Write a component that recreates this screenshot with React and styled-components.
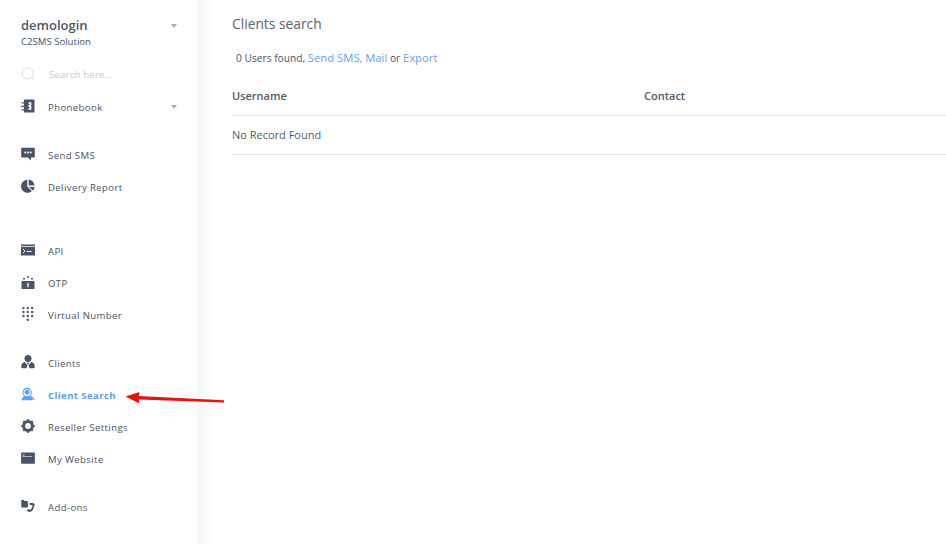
import React from 'react';
import styled, { createGlobalStyle } from 'styled-components';

const Global = createGlobalStyle`
  html, body { margin: 0; padding: 0; height: 100%; background: #fff; overflow: hidden; }
  body { font-family: "Open Sans", "Liberation Sans", sans-serif; }
`;

const Page = styled.div`
  position: relative;
  display: flex;
  width: 946px;
  height: 544px;
  overflow: hidden;
`;

const Sidebar = styled.aside`
  flex: 0 0 197px;
  box-sizing: border-box;
  height: 544px;
  padding-top: 15px;
  background: #fff;
  color: #4a5468;
`;

// soft shade right of the sidebar
const Shade = styled.div`
  flex: 0 0 21px;
  height: 544px;
  background: linear-gradient(to right, #f6f6f6, #fdfdfd 70%, #fff);
`;

const Account = styled.div`
  display: flex;
  justify-content: space-between;
  padding: 0 20px 0 21px;
`;

const AccountName = styled.div`
  font-size: 13px;
  line-height: 20px;
  font-weight: 600;
  color: #4f586b;
`;

const AccountSub = styled.div`
  font-size: 9.6px;
  line-height: 14px;
  color: #4a5468;
`;

const Caret = styled.span`
  width: 0;
  height: 0;
  margin-top: ${p => p.$top || 0}px;
  border-left: 3px solid transparent;
  border-right: 3px solid transparent;
  border-top: 4px solid #a9aeb8;
`;

const Search = styled.div`
  display: flex;
  align-items: center;
  height: 32px;
  margin: 9px 0 1px;
  padding-left: 21px;
  font-size: 9.6px;
  letter-spacing: 0.2px;
  color: #c6cad2;
`;

const SearchText = styled.span`
  margin-left: 14px;
`;

const Nav = styled.nav`
  display: flex;
  flex-direction: column;
`;

const Group = styled.div`
  display: flex;
  flex-direction: column;
  margin-top: ${p => p.$gap || 0}px;
`;

const Item = styled.a`
  display: flex;
  align-items: center;
  height: 32px;
  padding: 0 20px 0 21px;
  font-size: 9.6px;
  letter-spacing: 0.38px;
  font-weight: ${p => (p.$active ? 700 : 400)};
  color: ${p => (p.$active ? '#5b9dfa' : '#4a5468')};
`;

const IconBox = styled.span`
  display: flex;
  flex: 0 0 14px;
  width: 14px;
  height: 14px;
  margin-right: 13px;
  margin-top: -2px;
`;

const Label = styled.span`
  flex: 1;
`;

const Main = styled.main`
  flex: 1;
  padding: 15px 0 0 14px;
  min-width: 0;
`;

const Title = styled.h1`
  margin: 0;
  font-size: 13.8px;
  line-height: 17px;
  font-weight: 400;
  color: #5b6472;
`;

const Summary = styled.p`
  margin: 17px 0 0 4px;
  font-size: 10.2px;
  line-height: 17px;
  color: #4f5661;
`;

const Link = styled.a`
  font-size: 11.3px;
  color: #6b9ff0;
`;

const Table = styled.div`
  margin-top: 10px;
`;

const Row = styled.div`
  display: grid;
  grid-template-columns: 412px 1fr;
  align-items: center;
  box-sizing: content-box;
  height: 36px;
  padding-bottom: 2px;
  border-bottom: 1px solid #e4e5e7;
  font-size: 11px;
  font-weight: ${p => (p.$head ? 600 : 400)};
  color: #555b66;
`;

const Arrow = styled.svg`
  position: absolute;
  left: 124px;
  top: 390px;
`;

const stroke = { fill: 'none', stroke: 'currentColor' };

const icons = {
  phonebook: (
    <svg width="14" height="14" viewBox="0 0 14 14" fill="currentColor">
      <path d="M3 .6h9.500a1 1 0 0 1 1 1v10.800a1 1 0 0 1-1 1H3v-2H.6v-1.200H3V8H0V6.800h3V4.500H.6V3.300H3z" />
      <path fill="#fff" d="M7.500 3.300h2.800v7.400H7.500V9.200h1V8h-1V6h1V4.800h-1z" />
    </svg>
  ),
  sms: (
    <svg width="14" height="14" viewBox="0 0 14 14" fill="currentColor">
      <path d="M1 .8h12a.8.8 0 0 1 .8.8v8.200a.8.8 0 0 1-.8.8H10l-.3 2.900L7 10.600H1a.8.8 0 0 1-.8-.8V1.600A.8.8 0 0 1 1 .8z" />
      <circle cx="4.300" cy="5.600" r="1" fill="#fff" />
      <circle cx="7" cy="5.600" r="1" fill="#fff" />
      <circle cx="9.700" cy="5.600" r="1" fill="#fff" />
    </svg>
  ),
  report: (
    <svg width="14" height="14" viewBox="0 0 14 14" fill="currentColor">
      <path d="M6.200.8v6.600l4.700 4.700A6.500 6.500 0 1 1 6.200.8z" />
      <path d="M7.600.6a6.400 6.400 0 0 1 6 6H7.600z" />
      <path d="M8.200 8h5.400a6.400 6.400 0 0 1-1.700 3.700z" />
    </svg>
  ),
  api: (
    <svg width="14" height="14" viewBox="0 0 14 14" fill="currentColor">
      <path d="M0 1.500h14V3H0zM0 3.800h14v8.700H0z" />
      <path d="M2 6l2 2-2 2" fill="none" stroke="#fff" strokeWidth="1" />
      <path d="M5.500 8.500h5" fill="none" stroke="#fff" strokeWidth="1" />
    </svg>
  ),
  otp: (
    <svg width="14" height="14" viewBox="0 0 14 14" fill="currentColor">
      <rect x="0.500" y="6" width="13" height="8" rx=".6" />
      <circle cx="3" cy="3.700" r="1" />
      <circle cx="7" cy="2" r="1" />
      <circle cx="11" cy="3.700" r="1" />
      <path fill="#fff" d="M6.400 8.200h1.300v4H6.400zM5.400 9.300l1-1.100v1.100z" />
    </svg>
  ),
  dial: (
    <svg width="14" height="14" viewBox="0 0 14 14" fill="currentColor">
      {[1, 5, 9].flatMap(y =>
        [2.500, 6.800, 11.100].map(x => <circle key={`${x}-${y}`} cx={x} cy={y} r="1.200" />)
      )}
      <circle cx="6.800" cy="12.800" r="1.200" />
    </svg>
  ),
  clients: (
    <svg width="14" height="14" viewBox="0 0 14 14" fill="currentColor">
      <circle cx="7" cy="3.600" r="3.500" />
      <path d="M3.800 7c-2.200.4-3.600 2.200-3.600 4.800 0 .7.500 1.400 1.300 1.400h3.900l1-3zM10.200 7c2.200.4 3.600 2.200 3.600 4.800 0 .7-.5 1.400-1.300 1.400H8.600l-1-3z" />
      <path d="M6 7.600h2l-.5 2h-1z" />
    </svg>
  ),
  search: (
    <svg width="16" height="15" viewBox="0 0 16 15" fill="currentColor">
      <circle cx="7" cy="5.300" r="4.800" {...stroke} strokeWidth="1.200" />
      <circle cx="7" cy="5" r="2.800" />
      <path d="M1 14v-1.500C1 11 3 10 5 9.600h4c2 .4 4 1.400 4 2.900V14z" />
      <path d="M11 9l4 4.500" {...stroke} strokeWidth="1.300" />
    </svg>
  ),
  settings: (
    <svg width="14" height="14" viewBox="0 0 14 14" fill="none" stroke="currentColor">
      <circle cx="7" cy="7" r="4.400" strokeWidth="3" />
      <path
        strokeWidth="2.200"
        d="M7 .2v1.600M7 12.200v1.600M.2 7h1.600M12.200 7h1.600M2.200 2.200l1.100 1.100M10.700 10.700l1.100 1.100M2.200 11.800l1.100-1.100M10.700 3.300l1.100-1.100"
      />
    </svg>
  ),
  website: (
    <svg width="14" height="14" viewBox="0 0 14 14" fill="currentColor">
      <path d="M.8 1.500h12.400a.7.7 0 0 1 .7.7v9.800a.7.7 0 0 1-.7.7H.8a.7.7 0 0 1-.7-.7V2.200a.7.7 0 0 1 .7-.7z" />
      <path fill="#fff" d="M1.500 3.500h2v1h-2zM1.500 5.200h9.500v.9H1.500z" opacity=".75" />
    </svg>
  ),
  addons: (
    <svg width="15" height="14" viewBox="0 0 15 14" fill="currentColor">
      <path d="M.3.600h2.600l1 1.100h2.700l.8 1.100v5.800H.3z" />
      <path d="M9.300 3.800h3.700l1.800 1.700-2.200 6-2.500 2-3-.5-1.200-1.800 2-.8 2 .5 1.600-1.500 1-3.500H9.300z" />
    </svg>
  ),
};

const groups = [
  { gap: 16, items: [['sms', 'Send SMS'], ['report', 'Delivery Report']] },
  { gap: 32, items: [['api', 'API'], ['otp', 'OTP'], ['dial', 'Virtual Number']] },
  {
    gap: 16,
    items: [
      ['clients', 'Clients'],
      ['search', 'Client Search', true],
      ['settings', 'Reseller Settings'],
      ['website', 'My Website'],
    ],
  },
  { gap: 16, items: [['addons', 'Add-ons']] },
];

export default function App() {
  return (
    <Page>
      <Global />
      <Sidebar>
        <Account>
          <div>
            <AccountName>demologin</AccountName>
            <AccountSub>C2SMS Solution</AccountSub>
          </div>
          <Caret $top={9} />
        </Account>
        <Search>
          <svg width="14" height="14" viewBox="0 0 14 14" fill="none" stroke="#d9dce2" strokeWidth="1">
            <circle cx="6.500" cy="6.500" r="5.500" />
            <path d="M10.500 10.500l2.500 2.500" />
          </svg>
          <SearchText>Search here...</SearchText>
        </Search>
        <Nav>
          <Item>
            <IconBox>{icons.phonebook}</IconBox>
            <Label>Phonebook</Label>
            <Caret />
          </Item>
          {groups.map(g => (
            <Group key={g.items[0][1]} $gap={g.gap}>
              {g.items.map(([icon, text, active]) => (
                <Item key={text} $active={active}>
                  <IconBox>{icons[icon]}</IconBox>
                  <Label>{text}</Label>
                </Item>
              ))}
            </Group>
          ))}
        </Nav>
      </Sidebar>
      <Shade />
      <Main>
        <Title>Clients search</Title>
        <Summary>
          0 Users found, <Link>Send SMS,</Link> <Link>Mail</Link> or <Link>Export</Link>
        </Summary>
        <Table>
          <Row $head>
            <span>Username</span>
            <span>Contact</span>
          </Row>
          <Row>
            <span>No Record Found</span>
          </Row>
        </Table>
      </Main>
      <Arrow width="104" height="16" viewBox="0 0 104 16">
        <path d="M1.500 6.500l14-4.500-.8 4 85.300 4.300v2.200L14.700 9.500l.8 4z" fill="#ee0f0f" />
      </Arrow>
    </Page>
  );
}
